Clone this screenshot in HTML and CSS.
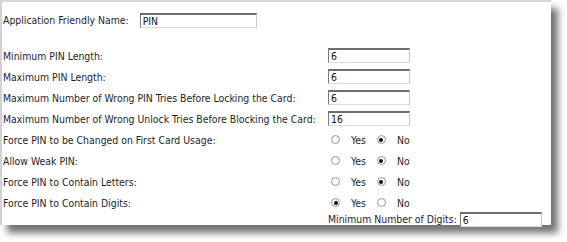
FILE: index.html
```html
<!DOCTYPE html>
<html>
<head>
<meta charset="utf-8">
<link rel="stylesheet" href="styles.css">
</head>
<body>
<div class="panel">
  <div class="name-row">
    <span class="label">Application Friendly Name:</span>
    <span class="field name-field">PIN</span>
  </div>
  <div class="grid">
    <div class="label">Minimum PIN Length:</div>
    <div class="cell"><span class="field num">6</span></div>
    <div class="label">Maximum PIN Length:</div>
    <div class="cell"><span class="field num">6</span></div>
    <div class="label">Maximum Number of Wrong PIN Tries Before Locking the Card:</div>
    <div class="cell"><span class="field num">6</span></div>
    <div class="label">Maximum Number of Wrong Unlock Tries Before Blocking the Card:</div>
    <div class="cell"><span class="field num">16</span></div>
    <div class="label">Force PIN to be Changed on First Card Usage:</div>
    <div class="cell radios"><span class="radio"></span><span class="opt">Yes</span><span class="radio on"></span><span class="opt">No</span></div>
    <div class="label">Allow Weak PIN:</div>
    <div class="cell radios"><span class="radio"></span><span class="opt">Yes</span><span class="radio on"></span><span class="opt">No</span></div>
    <div class="label">Force PIN to Contain Letters:</div>
    <div class="cell radios"><span class="radio"></span><span class="opt">Yes</span><span class="radio on"></span><span class="opt">No</span></div>
    <div class="label">Force PIN to Contain Digits:</div>
    <div class="cell radios"><span class="radio on"></span><span class="opt">Yes</span><span class="radio"></span><span class="opt">No</span></div>
    <div class="label"></div>
    <div class="cell sub"><span class="sublabel">Minimum Number of Digits:</span><span class="field digits">6</span></div>
  </div>
</div>
</body>
</html>
```
FILE: styles.css
```css
html, body {
  margin: 0;
  padding: 0;
  background: #fff;
}
body {
  min-height: 242px;
  font-family: "DejaVu Sans Condensed", "DejaVu Sans", Verdana, sans-serif;
  font-size: 10.4px;
  color: #1e1e1e;
}
.panel {
  box-sizing: border-box;
  width: 551px;
  height: 225px;
  background: #fff;
  border-top: 2px solid #d6d6d6;
  border-left: 2px solid #d2d2d2;
  box-shadow: 7px 8px 7px rgba(0, 0, 0, 0.55);
  padding-left: 1px;
}
.name-row {
  display: flex;
  align-items: center;
  height: 14px;
  margin-top: 11px;
}
.name-row .field { margin-left: 11px; }
.label, .sublabel, .opt { white-space: nowrap; }
.field {
  box-sizing: border-box;
  display: inline-flex;
  align-items: center;
  height: 15px;
  padding-left: 2px;
  border-style: solid;
  border-width: 2px 1px 1px 1px;
  border-color: #6e6e6e #c8c8c8 #dcdcdc #7a7a7a;
  background: #fff;
  color: #111;
}
.name-field { width: 117px; }
.num { width: 82px; }
.digits { width: 82px; margin-left: 3px; }
.grid {
  display: grid;
  grid-template-columns: 325px 1fr;
  grid-template-rows: repeat(8, 21px) 15px;
  margin-top: 18px;
}
.grid .label, .cell {
  display: flex;
  align-items: center;
}
.sub {
  margin-top: -3px;
  color: #2a2030;
}
.radios .radio {
  box-sizing: border-box;
  width: 9px;
  height: 9px;
  border-radius: 50%;
  border: 1px solid #9a9a9a;
  background: radial-gradient(circle, #fff 45%, #e4e4e4 100%);
  margin-left: 3px;
  display: flex;
  align-items: center;
  justify-content: center;
}
.radios .radio.on::after {
  content: "";
  width: 4px;
  height: 4px;
  border-radius: 50%;
  background: #111;
}
.opt { margin-left: 11px; margin-right: 8px; }
```
